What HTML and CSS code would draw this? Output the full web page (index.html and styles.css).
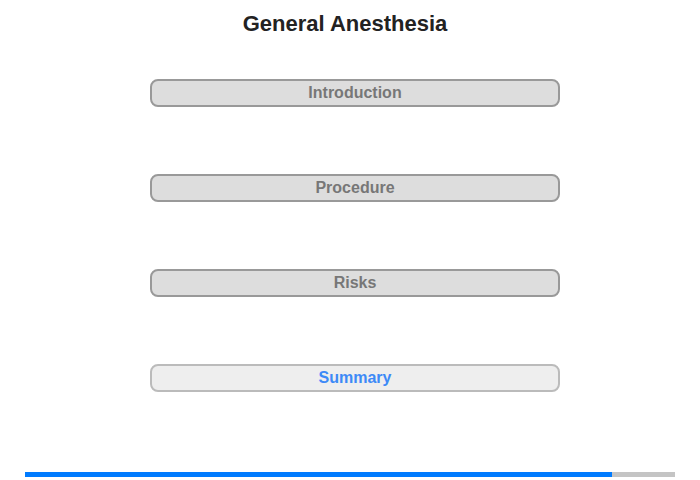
FILE: index.html
```html
<!DOCTYPE html>
<html lang="en">
<head>
    <meta charset="UTF-8">
    <title>General Anesthesia</title>
    <link rel="stylesheet" href="styles.css">
</head>
<body>

    <!-- Title -->
    <h1 class="title">General Anesthesia</h1>

    <!-- Chapter menu -->
    <div class="menu">
        <button class="chapter">Introduction</button>
        <button class="chapter">Procedure</button>
        <button class="chapter">Risks</button>
        <button class="chapter current">Summary</button>
    </div>

    <!-- Progress bar -->
    <div class="progress">
        <div class="progress-fill" style="width: 90.3%"></div>
    </div>

</body>
</html>
```

FILE: styles.css
```css
/* Page */
body {
    font-family: 'Liberation Sans', Arial, sans-serif;
    background-color: #fff;
    margin: 0;
    padding: 0;
    width: 700px;
    height: 480px;
    overflow: hidden;
}

.title {
    margin: 0 10px 0 0;
    padding-top: 11px;
    font-size: 22px;
    line-height: 26px;
    text-align: center;
    color: #222;
}

/* Chapter buttons */
.menu {
    display: flex;
    flex-direction: column;
    align-items: center;
    gap: 67px;
    margin-top: 42px;
    margin-left: 10px;
}

.chapter {
    width: 410px;
    height: 28px;
    padding: 0;
    background-color: #dddddd;
    border: 2px solid #999;
    border-radius: 8px;
    font-family: 'Liberation Sans', Arial, sans-serif;
    font-size: 16px;
    font-weight: bold;
    color: #777;
    cursor: pointer;
}

.chapter.current {
    background-color: #eeeeee;
    border-color: #bbb;
    color: #3d8af7;
}

/* Progress bar */
.progress {
    position: absolute;
    left: 25px;
    top: 472px;
    width: 650px;
    height: 5px;
    background-color: #c4c4c4;
}

.progress-fill {
    height: 100%;
    background-color: #007bff;
}
```
